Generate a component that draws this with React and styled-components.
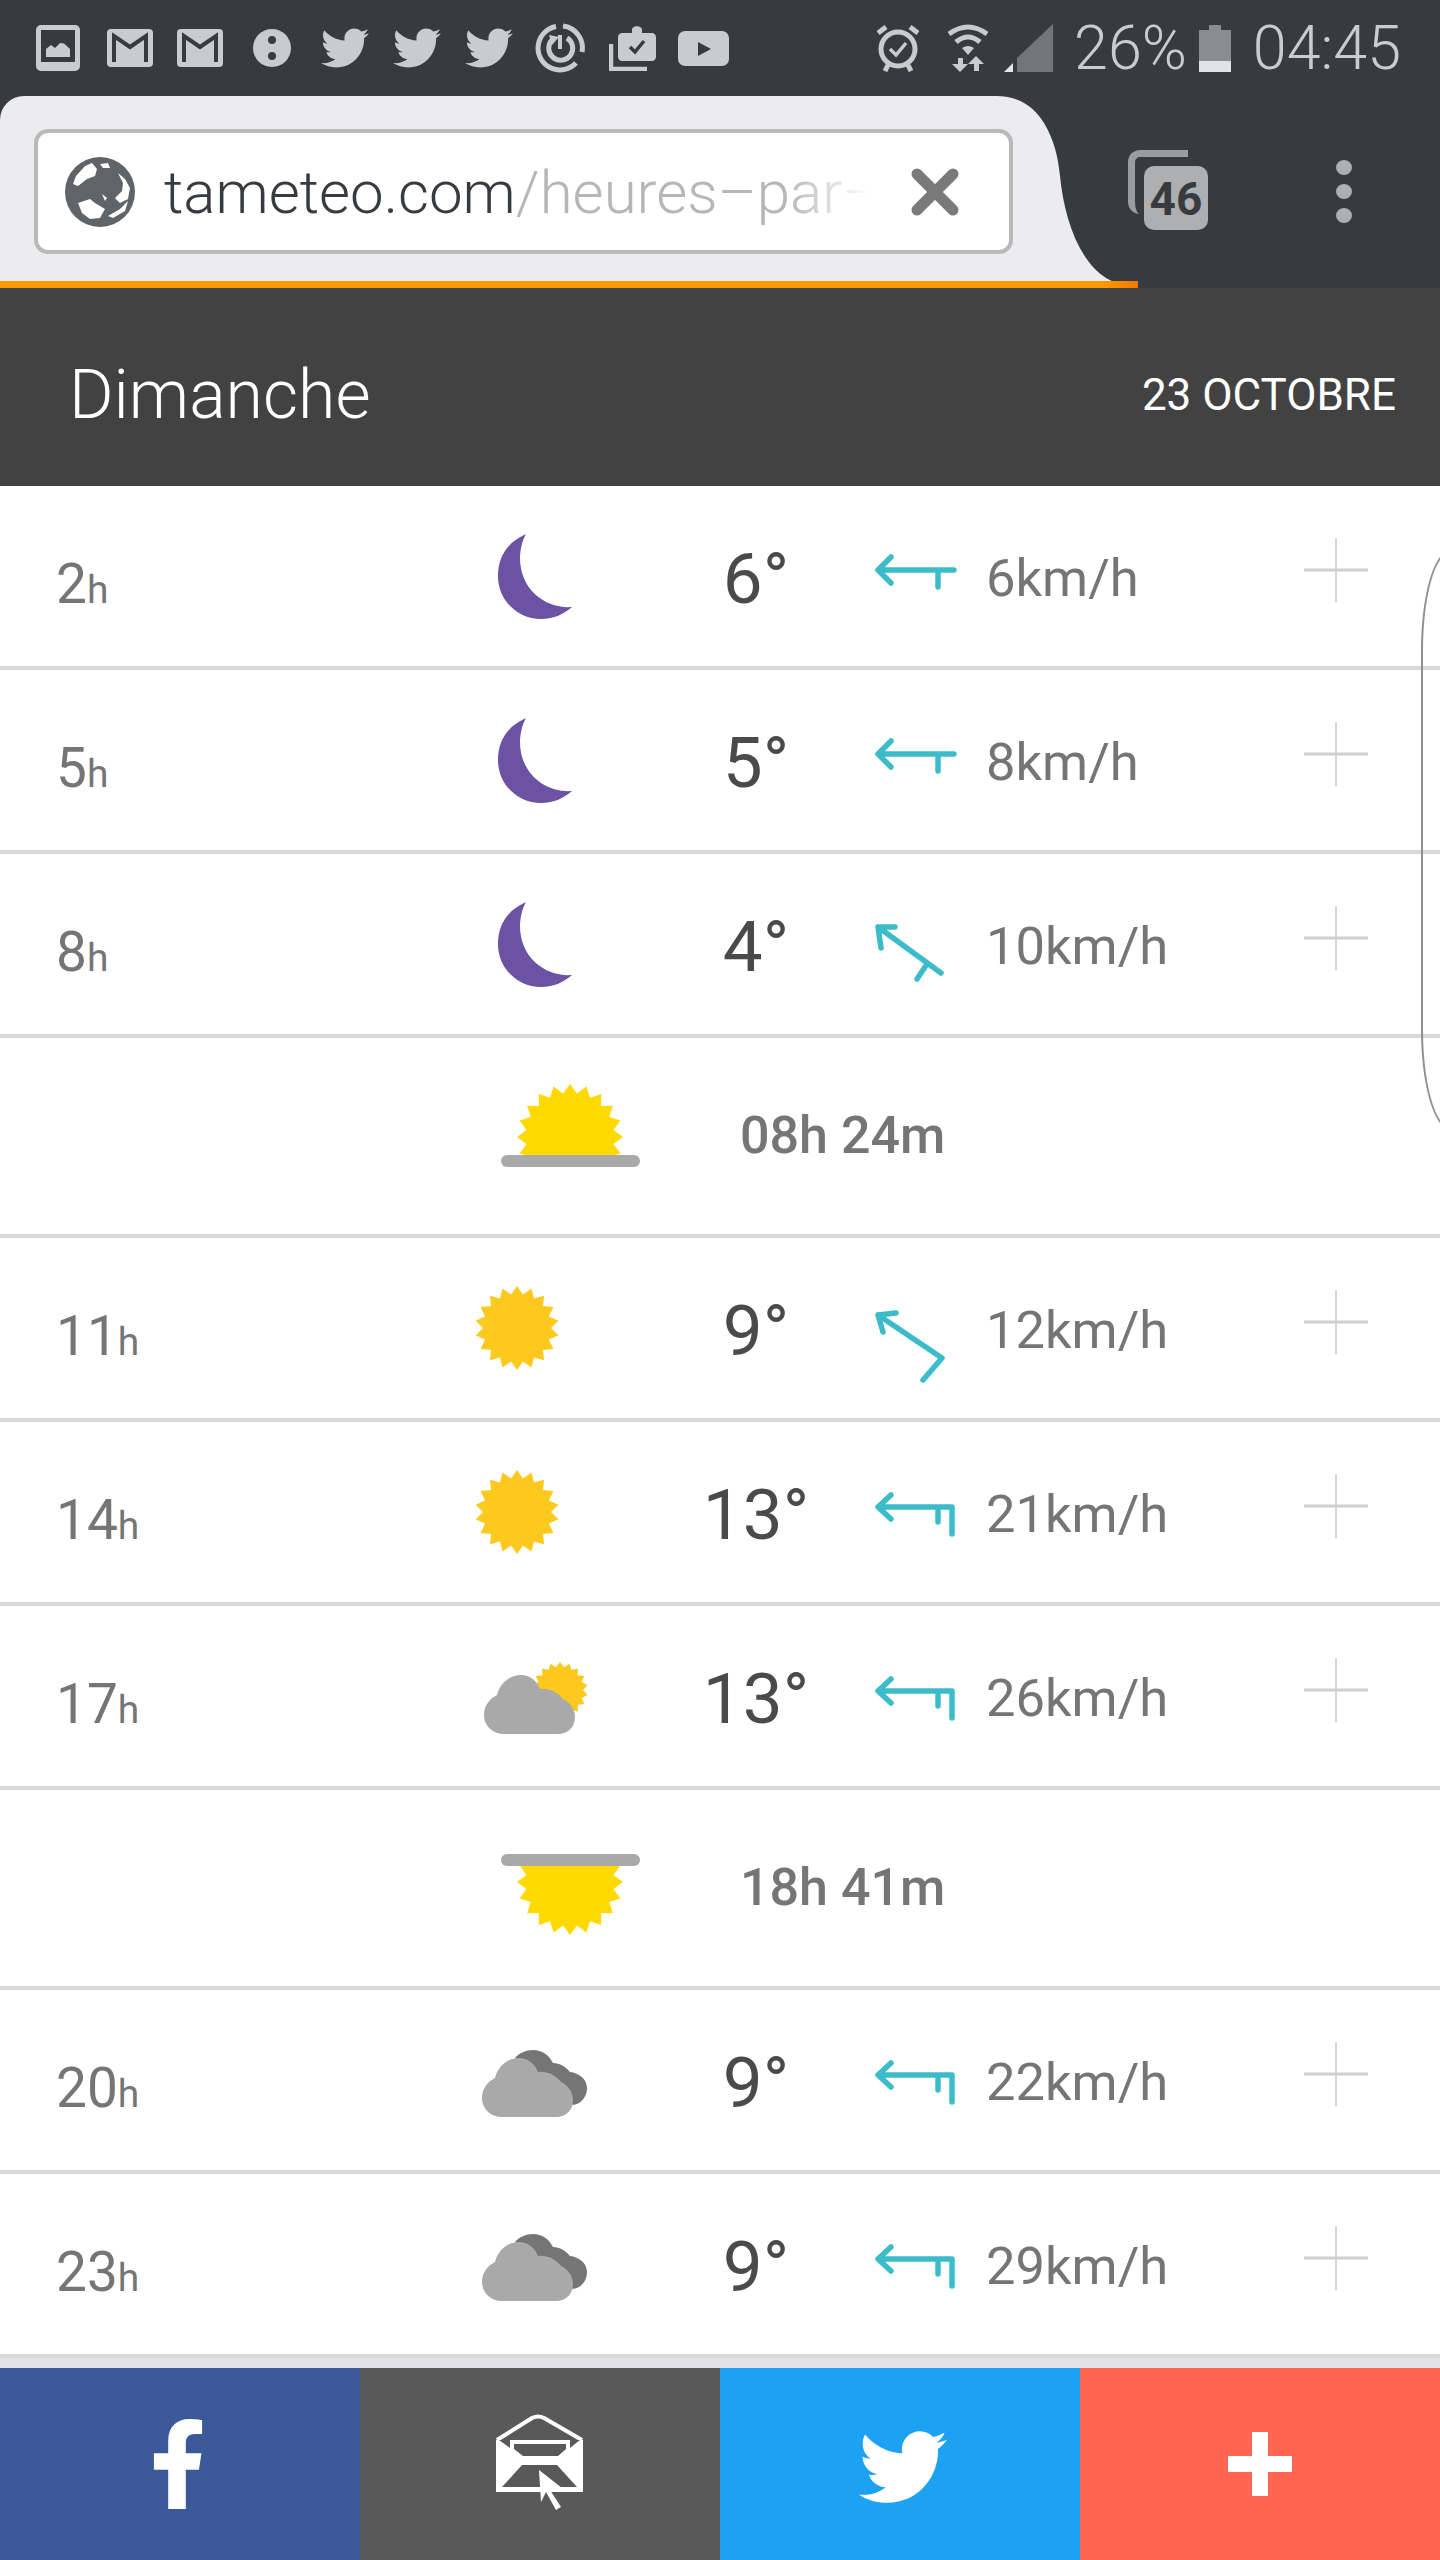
import React from 'react';
import styled, { createGlobalStyle } from 'styled-components';
import { FaTwitter, FaFacebookF } from 'react-icons/fa';

const GlobalStyle = createGlobalStyle`
  html, body { margin: 0; padding: 0; background: #fff; }
  body { font-family: Roboto, "Liberation Sans", sans-serif; }
`;

const Page = styled.div`
  width: 1440px;
  height: 2560px;
  position: relative;
  overflow: hidden;
  display: flex;
  flex-direction: column;
  background: #e3e2e6;
`;

const Chrome = styled.div`
  background: #373b40;
  position: relative;
`;
const StatusBar = styled.div`
  height: 96px;
  display: flex;
  align-items: center;
  color: #c9cbcd;
  padding: 0 39px 0 36px;
  box-sizing: border-box;
`;
const StatusIcons = styled.div`
  display: flex;
  align-items: center;
  gap: 24px;
  flex: 1;
`;
const StatusRight = styled.div`
  display: flex;
  align-items: center;
`;
const StatusText = styled.span`
  font-size: 61px;
  font-weight: 300;
  margin: 0 ${p => p.$right || 0}px 0 ${p => p.$left || 0}px;
`;
const Gap = styled.span`
  width: ${p => p.$size}px;
`;
const ToolRow = styled.div`
  height: 192px;
  display: flex;
`;
const Tab = styled.div`
  width: 996px;
  height: 186px;
  background: #ebebf0;
  border-top-left-radius: 24px;
  padding: 33px 0 0 34px;
  box-sizing: border-box;
  flex-shrink: 0;
  position: relative;
  z-index: 1;
`;
const TabCurve = styled.svg`
  width: 118px;
  height: 186px;
  flex-shrink: 0;
  display: block;
`;
const UrlBox = styled.div`
  width: 979px;
  height: 125px;
  background: #fff;
  border: 4px solid #b9b9b9;
  border-radius: 14px;
  box-sizing: border-box;
  display: flex;
  align-items: center;
  padding-left: 27px;
`;
const UrlText = styled.div`
  margin-left: 29px;
  padding-top: 2px;
  width: 705px;
  font-size: 60px;
  font-weight: 300;
  white-space: nowrap;
  overflow: hidden;
  color: #373b40;
  -webkit-mask-image: linear-gradient(to right, #000 88%, transparent 100%);
  mask-image: linear-gradient(to right, #000 88%, transparent 100%);
  span { color: #b4b6b8; }
`;
const CloseIcon = styled.svg`
  width: 48px;
  height: 48px;
  margin-left: 42px;
`;
const TabCount = styled.div`
  margin: 54px 0 0 14px;
  width: 80px;
  height: 80px;
  flex-shrink: 0;
  position: relative;
  &::before {
    content: '';
    position: absolute;
    left: 0;
    top: 0;
    width: 60px;
    height: 64px;
    border: 7px solid #9a9c9e;
    border-right: 0;
    border-bottom: 0;
    border-radius: 12px 0 0 12px;
    box-sizing: border-box;
  }
`;
const TabNumber = styled.div`
  position: absolute;
  right: 0;
  bottom: 0;
  width: 64px;
  height: 64px;
  border-radius: 10px;
  background: #adafb1;
  color: #373b40;
  font-size: 46px;
  font-weight: 700;
  line-height: 66px;
  text-align: center;
`;
const MenuDots = styled.div`
  margin: 64px 0 0 128px;
  display: flex;
  flex-direction: column;
  gap: 9px;
  i {
    display: block;
    width: 16px;
    height: 15px;
    border-radius: 50%;
    background: #adafb1;
  }
`;
const Progress = styled.div`
  position: absolute;
  left: 0;
  top: 281px;
  width: 1138px;
  height: 7px;
  z-index: 2;
  background: linear-gradient(to right, #ff9800 97%, #f57600 100%);
`;

const DayHeader = styled.div`
  height: 198px;
  box-sizing: border-box;
  background: #424242;
  color: #fff;
  display: flex;
  align-items: center;
  justify-content: space-between;
  padding: 15px 44px 0 69px;
`;
const DayName = styled.div`
  font-size: 68px;
  font-weight: 300;
`;
const DayDate = styled.div`
  font-size: 44px;
  font-weight: 400;
`;

const List = styled.div`
  background: #fff;
  position: relative;
`;
const Row = styled.div`
  height: 184px;
  border-bottom: 4px solid #d8d8d8;
  box-sizing: border-box;
  display: grid;
  grid-template-columns: 476px 180px 200px 11px 120px 1fr 96px 56px;
  align-items: center;
`;
const Hour = styled.div`
  padding: 16px 0 0 56px;
  font-size: 55px;
  font-weight: 400;
  color: #757575;
  small {
    font-size: 39px;
    font-weight: 400;
  }
`;
const Temp = styled.div`
  font-size: 71px;
  font-weight: 400;
  color: #4a4a4a;
  text-align: center;
  padding-top: 4px;
`;
const Speed = styled.div`
  font-size: 52.5px;
  font-weight: 400;
  color: #757575;
  padding-top: 4px;
  margin-left: -1px;
`;
const PlusIcon = styled.svg`
  width: 64px;
  height: 64px;
  margin: -13px 0 0 16px;
`;
const DayLength = styled.div`
  font-size: 52px;
  font-weight: 500;
  color: #757575;
  padding: 0 0 2px 84px;
`;
const SunRow = styled(Row)`
  height: 200px;
  grid-template-columns: 476px 180px 1fr;
`;

const Handle = styled.div`
  position: absolute;
  left: 1421px;
  top: 64px;
  width: 60px;
  height: 580px;
  border: 2px solid #8f8f8f;
  border-radius: 30px / 100px;
  box-sizing: border-box;
  pointer-events: none;
`;

const ShareBar = styled.div`
  margin-top: auto;
  height: 192px;
  display: grid;
  grid-template-columns: repeat(4, 1fr);
`;
const ShareButton = styled.div`
  background: ${p => p.$bg};
  color: #fff;
  display: flex;
  align-items: center;
  justify-content: center;
`;
const FacebookGlyph = styled(FaFacebookF)`
  margin-right: 4px;
`;
const TwitterGlyph = styled(FaTwitter)`
  margin: 6px 0 0 6px;
`;
const PlusMark = styled.div`
  width: 64px;
  height: 64px;
  position: relative;
  &::before, &::after {
    content: '';
    position: absolute;
    background: #fff;
  }
  &::before { left: 24px; top: 0; width: 16px; height: 64px; }
  &::after { left: 0; top: 24px; width: 64px; height: 16px; }
`;

const starPoints = (cx, cy, outer, inner, count) => {
  const pts = [];
  for (let i = 0; i < count * 2; i++) {
    const r = i % 2 ? inner : outer;
    const a = (Math.PI * i) / count - Math.PI / 2;
    pts.push(`${(cx + r * Math.cos(a)).toFixed(1)},${(cy + r * Math.sin(a)).toFixed(1)}`);
  }
  return pts.join(' ');
};

const WeatherSvg = styled.svg`
  width: 120px;
  height: 100px;
  display: block;
`;

const Moon = () => (
  <WeatherSvg viewBox="0 0 120 100">
    <path fill="#6b52a3" d="M50 8C32 16 22 30 22 50C22 75 42 93 65 93C78 93 88 88 96 81C70 83 44 64 44 32C44 24 46 15 50 8Z" />
  </WeatherSvg>
);

const Sun = () => (
  <WeatherSvg viewBox="0 0 120 100">
    <polygon fill="#fdc91f" points={starPoints(41, 50, 42, 34, 18)} />
  </WeatherSvg>
);

const cloudPath = 'M26 87C14 87 6 78 6 68C6 59 11 52 19 48C22 36 32 28 43 28C52 28 59 34 62 42C70 41 80 45 85 52C92 55 97 62 97 70C97 80 90 87 80 87Z';

const SunCloud = () => (
  <WeatherSvg viewBox="0 0 120 100">
    <polygon fill="#fdc91f" points={starPoints(84, 44, 28, 23, 18)} />
    <path fill="#a9a9a9" transform="translate(2 1)" d={cloudPath} />
  </WeatherSvg>
);

const Clouds = () => (
  <WeatherSvg viewBox="0 0 120 100">
    <path fill="#757575" d="M39 28C43 23 50 20 57 20C66 20 73 25 77 33C84 33 90 37 94 42C103 43 111 49 111 58C111 67 105 74 97 75L80 60Z" />
    <path fill="#a9a9a9" d={cloudPath} />
  </WeatherSvg>
);

const SunEdge = ({ rise }) => (
  <svg width="170" height="100" viewBox="0 0 170 100" overflow="visible">
    {rise ? (
      <>
        <clipPath id="riseClip"><rect x="0" y="-10" width="170" height="80" /></clipPath>
        <polygon clipPath="url(#riseClip)" fill="#ffd900" points={starPoints(94, 51, 53, 44, 20)} />
        <rect x="25" y="69" width="139" height="12" rx="6" fill="#a9a9a9" />
      </>
    ) : (
      <>
        <clipPath id="setClip"><rect x="0" y="22" width="170" height="83" /></clipPath>
        <polygon clipPath="url(#setClip)" fill="#ffd900" points={starPoints(94, 44, 53, 44, 20)} />
        <rect x="25" y="16" width="139" height="12" rx="6" fill="#a9a9a9" />
      </>
    )}
  </svg>
);

const windPaths = {
  one: 'M24 39L11 52L24 65M11 52H87M71 52V69',
  two: 'M24 41L11 53L24 65M11 53H85V80M71 53V68',
  diagSmall: 'M28 41L11 41L14 62M11 41L74 87M60 78L50 93',
  diagBig: 'M29 43L11 45L16 62M11 45L75 88L56 110',
};

const WindSvg = styled.svg`
  width: 100px;
  height: 120px;
  display: block;
  margin-top: 3px;
  fill: none;
  stroke: #3cbccb;
  stroke-width: 5.5;
  stroke-linecap: round;
  stroke-linejoin: round;
`;

const Wind = ({ kind }) => (
  <WindSvg viewBox="0 0 100 120">
    <path d={windPaths[kind]} />
  </WindSvg>
);

const Plus = () => (
  <PlusIcon viewBox="0 0 64 64">
    <path d="M32 0V64" stroke="#d4d4d4" strokeWidth="2" />
    <path d="M0 32H64" stroke="#cfcfcf" strokeWidth="3" />
  </PlusIcon>
);

const ForecastRow = ({ hour, icon, temp, wind, speed }) => (
  <Row>
    <Hour>{hour}<small>h</small></Hour>
    {icon}
    <Temp>{temp}°</Temp>
    <span />
    <Wind kind={wind} />
    <Speed>{speed}km/h</Speed>
    <Plus />
    <span />
  </Row>
);

const ImageSvg = styled.svg`
  margin-right: 3px;
`;
const ImageIcon = () => (
  <ImageSvg width="44" height="46" viewBox="0 0 44 46">
    <rect width="44" height="46" rx="5" fill="#c9cbcd" />
    <rect x="5" y="5" width="34" height="32" fill="#373b40" />
    <path fill="#c9cbcd" d="M10 32V24L15 20L19 23L24 18L28 18.5L34 24V32Z" />
  </ImageSvg>
);

const MailIcon = () => (
  <svg width="46" height="38" viewBox="0 0 46 38">
    <rect width="46" height="38" rx="4" fill="#c9cbcd" />
    <path fill="none" stroke="#373b40" strokeWidth="4" d="M7 33V7L23 18L39 7V33" />
  </svg>
);

const DotsSvg = styled.svg`
  margin: 0 6px;
`;
const DotsIcon = () => (
  <DotsSvg width="38" height="38" viewBox="0 0 38 38">
    <circle cx="19" cy="19" r="19" fill="#c9cbcd" />
    <circle cx="19" cy="11" r="4" fill="#373b40" />
    <circle cx="19" cy="27" r="4" fill="#373b40" />
  </DotsSvg>
);

const PowerSvg = styled.svg`
  margin-left: -2px;
`;
const PowerIcon = () => (
  <PowerSvg width="50" height="50" viewBox="0 0 50 50" fill="none" stroke="#c9cbcd">
    <path strokeWidth="5" d="M28 3A22 22 0 0 1 47 29M41 40A22 22 0 0 1 3 25A22 22 0 0 1 21 3.5" />
    <path strokeWidth="5" d="M17 17A12 12 0 1 0 32 15" />
    <path strokeWidth="4" d="M25 12V26" />
    <path fill="#c9cbcd" stroke="none" d="M14 12L24 14L17 22Z" />
  </PowerSvg>
);

const BriefIcon = () => (
  <svg width="47" height="45" viewBox="0 0 47 45">
    <path fill="#c9cbcd" d="M13 7H23V4C23 -1 33 -1 33 4V7H43C45 7 47 9 47 11V31C47 33 45 35 43 35H13C11 35 9 33 9 31V11C9 9 11 7 13 7Z" />
    <path fill="none" stroke="#373b40" strokeWidth="3.5" d="M21 21L26 26L35 15" />
    <path fill="none" stroke="#c9cbcd" strokeWidth="4.5" d="M2 18V43H38" />
  </svg>
);

const PlaySvg = styled.svg`
  margin-left: -2px;
`;
const PlayIcon = () => (
  <PlaySvg width="51" height="35" viewBox="0 0 51 35">
    <rect width="51" height="35" rx="7" fill="#c9cbcd" />
    <path fill="#373b40" d="M20 11V25L33 18Z" />
  </PlaySvg>
);

const AlarmIcon = () => (
  <svg width="42" height="48" viewBox="0 0 42 48" fill="none" stroke="#c9cbcd" strokeWidth="5">
    <circle cx="21" cy="25" r="17" />
    <path d="M1 9L9 3M33 3L41 9M8 47L11 41M34 47L31 41" />
    <path strokeWidth="3.5" d="M13 25L19 31L29 19" />
  </svg>
);

const WifiIcon = () => (
  <svg width="42" height="48" viewBox="0 0 42 48" fill="none" stroke="#c9cbcd" strokeWidth="5">
    <path d="M2 10Q21 -4 40 10M9 18Q21 8 33 18" />
    <path fill="#c9cbcd" stroke="none" d="M15 24Q21 20 27 24L21 31ZM13 48L5 40H11V34H16V40H21ZM29 32L37 40H32V47H27V40H21Z" />
  </svg>
);

const SignalIcon = () => (
  <svg width="50" height="48" viewBox="0 0 50 48">
    <path fill="#72767a" d="M13 34L49 0V48H13Z" />
    <path fill="#e6e7e8" d="M0 48L9 39V48Z" />
  </svg>
);

const BatteryIcon = () => (
  <svg width="32" height="47" viewBox="0 0 32 47">
    <path fill="#8a8d90" d="M10 0H22V5H32V36H0V5H10Z" />
    <rect y="36" width="32" height="11" fill="#e2e3e4" />
  </svg>
);

const Globe = () => (
  <svg width="70" height="70" viewBox="0 0 70 70">
    <circle cx="35" cy="35" r="35" fill="#5f6468" />
    <path fill="#fff" d="M8 27L11 19L20 9L27 6L32 12L30 19L22 22L13 29ZM35 7L43 6L45 11L38 11ZM53 16L60 22L65 31L63 42L55 46L50 41L57 34L58 26ZM13 46L25 42L30 46L40 52L35 61L25 62L17 56ZM43 59L55 52L63 44L60 54L48 61ZM37 37L42 41L40 44Z" />
  </svg>
);

const EnvelopeCursor = () => (
  <svg width="140" height="130" viewBox="0 0 140 130">
    <path fill="none" stroke="#fff" strokeWidth="4" strokeLinejoin="round" d="M27 41L62 19Q68 16 74 19L112 41" />
    <rect x="26" y="41" width="87" height="52" fill="#fff" />
    <path fill="#595959" d="M52 66H87L107 88H32Z" />
    <path fill="#595959" d="M44 45H96V50L88 57H53L44 50Z" />
    <path fill="#595959" d="M29 41H40V49ZM110 41H100V49Z" />
    <path fill="#fff" d="M69 71L92 89L80 91L91 108L86 111L76 93L71 103Z" />
  </svg>
);

export default function App() {
  return (
    <Page>
      <GlobalStyle />
      <Chrome>
        <StatusBar>
          <StatusIcons>
            <ImageIcon />
            <MailIcon />
            <MailIcon />
            <DotsIcon />
            <FaTwitter size={48} />
            <FaTwitter size={48} />
            <FaTwitter size={48} />
            <PowerIcon />
            <BriefIcon />
            <PlayIcon />
          </StatusIcons>
          <StatusRight>
            <AlarmIcon />
            <Gap $size={28} />
            <WifiIcon />
            <Gap $size={15} />
            <SignalIcon />
            <StatusText $left={20} $right={12}>26%</StatusText>
            <BatteryIcon />
            <StatusText $left={22}>04:45</StatusText>
          </StatusRight>
        </StatusBar>
        <ToolRow>
          <Tab>
            <UrlBox>
              <Globe />
              <UrlText>tameteo.com<span>/heures–par–heure</span></UrlText>
              <CloseIcon viewBox="0 0 48 48">
                <path d="M6 6L42 42M42 6L6 42" stroke="#7a7a7a" strokeWidth="11" strokeLinecap="round" />
              </CloseIcon>
            </UrlBox>
          </Tab>
          <TabCurve viewBox="0 0 118 186">
            <path fill="#ebebf0" d="M0 0C22 0 38 10 48 27C58 44 62 60 64 80C67 110 75 140 90 162C98 174 108 182 118 186H0Z" />
          </TabCurve>
          <TabCount>
            <TabNumber>46</TabNumber>
          </TabCount>
          <MenuDots><i /><i /><i /></MenuDots>
        </ToolRow>
        <Progress />
      </Chrome>
      <DayHeader>
        <DayName>Dimanche</DayName>
        <DayDate>23 OCTOBRE</DayDate>
      </DayHeader>
      <List>
        <ForecastRow hour="2" icon={<Moon />} temp="6" wind="one" speed="6" />
        <ForecastRow hour="5" icon={<Moon />} temp="5" wind="one" speed="8" />
        <ForecastRow hour="8" icon={<Moon />} temp="4" wind="diagSmall" speed="10" />
        <SunRow>
          <span />
          <SunEdge rise />
          <DayLength>08h 24m</DayLength>
        </SunRow>
        <ForecastRow hour="11" icon={<Sun />} temp="9" wind="diagBig" speed="12" />
        <ForecastRow hour="14" icon={<Sun />} temp="13" wind="two" speed="21" />
        <ForecastRow hour="17" icon={<SunCloud />} temp="13" wind="two" speed="26" />
        <SunRow>
          <span />
          <SunEdge />
          <DayLength>18h 41m</DayLength>
        </SunRow>
        <ForecastRow hour="20" icon={<Clouds />} temp="9" wind="two" speed="22" />
        <ForecastRow hour="23" icon={<Clouds />} temp="9" wind="two" speed="29" />
        <Handle />
      </List>
      <ShareBar>
        <ShareButton $bg="#3b5998"><FacebookGlyph size={90} /></ShareButton>
        <ShareButton $bg="#595959"><EnvelopeCursor /></ShareButton>
        <ShareButton $bg="#1da1f2"><TwitterGlyph size={88} /></ShareButton>
        <ShareButton $bg="#ff6550"><PlusMark /></ShareButton>
      </ShareBar>
    </Page>
  );
}
